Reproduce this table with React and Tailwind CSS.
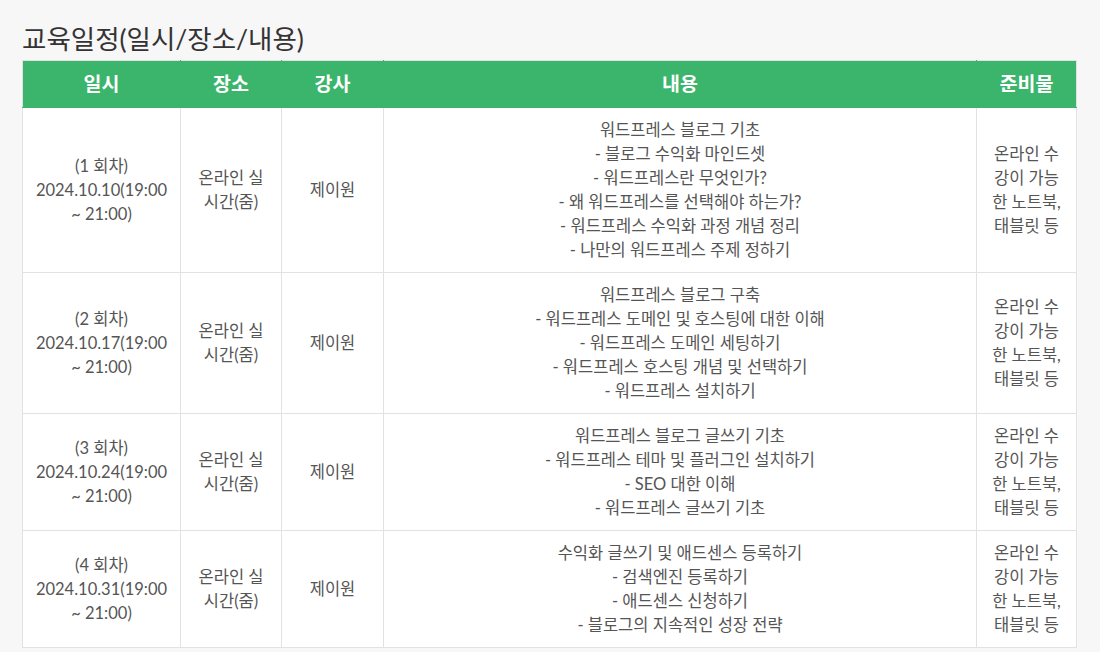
const sessions = [
  {
    no: 1,
    date: "2024.10.10(19:00",
    lines: [
      "워드프레스 블로그 기초",
      "- 블로그 수익화 마인드셋",
      "- 워드프레스란 무엇인가?",
      "- 왜 워드프레스를 선택해야 하는가?",
      "- 워드프레스 수익화 과정 개념 정리",
      "- 나만의 워드프레스 주제 정하기",
    ],
  },
  {
    no: 2,
    date: "2024.10.17(19:00",
    lines: [
      "워드프레스 블로그 구축",
      "- 워드프레스 도메인 및 호스팅에 대한 이해",
      "- 워드프레스 도메인 세팅하기",
      "- 워드프레스 호스팅 개념 및 선택하기",
      "- 워드프레스 설치하기",
    ],
  },
  {
    no: 3,
    date: "2024.10.24(19:00",
    lines: [
      "워드프레스 블로그 글쓰기 기초",
      "- 워드프레스 테마 및 플러그인 설치하기",
      "- SEO 대한 이해",
      "- 워드프레스 글쓰기 기초",
    ],
  },
  {
    no: 4,
    date: "2024.10.31(19:00",
    lines: [
      "수익화 글쓰기 및 애드센스 등록하기",
      "- 검색엔진 등록하기",
      "- 애드센스 신청하기",
      "- 블로그의 지속적인 성장 전략",
    ],
  },
];

function App() {
  return (
    <div className="min-h-screen bg-[#f7f7f7] px-[22px] pt-[23px] font-['Lato','Noto_Sans_CJK_KR',sans-serif]">
      <h2 className="text-[26.5px] leading-[33px] text-[#333] mb-[4px]">
        교육일정(일시/장소/내용)
      </h2>

      <table className="w-[1055px] table-fixed border-collapse bg-white text-[16.5px] leading-[24px] text-[#555]">
        <colgroup>
          <col className="w-[158px]" />
          <col className="w-[101px]" />
          <col className="w-[102px]" />
          <col />
          <col className="w-[100px]" />
        </colgroup>
        <thead>
          <tr className="bg-[#3bb56c] text-white text-[19.5px] leading-[24px] font-bold">
            <th className="h-[47px] border border-[#3bb56c] border-t-[#e2e2e2] border-l-[#e2e2e2]">
              일시
            </th>
            <th className="h-[47px] border border-[#3bb56c] border-t-[#e2e2e2]">
              장소
            </th>
            <th className="h-[47px] border border-[#3bb56c] border-t-[#e2e2e2]">
              강사
            </th>
            <th className="h-[47px] border border-[#3bb56c] border-t-[#e2e2e2]">
              내용
            </th>
            <th className="h-[47px] border border-[#3bb56c] border-t-[#e2e2e2] border-r-[#e2e2e2]">
              준비물
            </th>
          </tr>
        </thead>
        <tbody>
          {sessions.map((s) => (
            <tr key={s.no}>
              <td className="border border-[#e2e2e2] px-[6px] py-[10px] text-center whitespace-nowrap">
                ({s.no} 회차)
                <br />
                {s.date}
                <br />~ 21:00)
              </td>
              <td className="border border-[#e2e2e2] px-[6px] py-[10px] text-center whitespace-nowrap">
                온라인 실
                <br />
                시간(줌)
              </td>
              <td className="border border-[#e2e2e2] px-[10px] py-[10px] text-center">
                제이원
              </td>
              <td className="border border-[#e2e2e2] px-[10px] py-[10px] text-center">
                {s.lines.map((line) => (
                  <div key={line}>{line}</div>
                ))}
              </td>
              <td className="border border-[#e2e2e2] px-[6px] py-[10px] text-center whitespace-nowrap">
                온라인 수
                <br />
                강이 가능
                <br />
                한 노트북,
                <br />
                태블릿 등
              </td>
            </tr>
          ))}
        </tbody>
      </table>
    </div>
  );
}

export default App;
